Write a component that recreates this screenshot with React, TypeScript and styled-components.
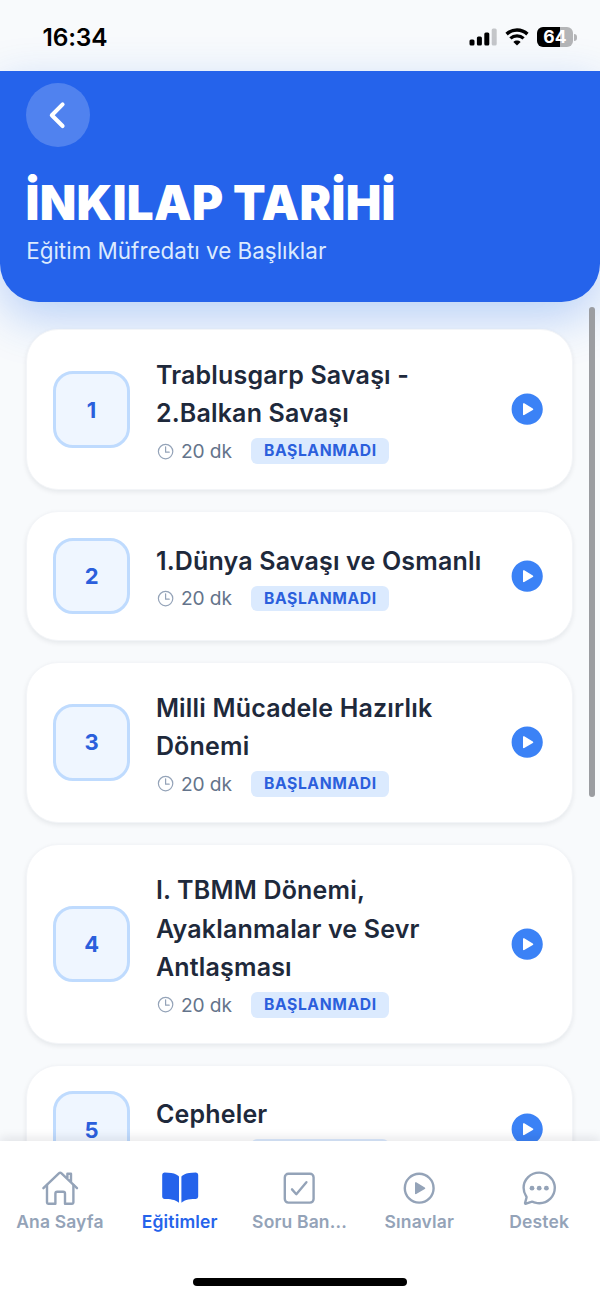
import React from "react";
import styled, { createGlobalStyle } from "styled-components";
import {
  IoBook,
  IoChatbubbleEllipsesOutline,
  IoCheckboxOutline,
  IoChevronBack,
  IoHomeOutline,
  IoPlayCircle,
  IoPlayCircleOutline,
  IoTimeOutline,
} from "react-icons/io5";

const GlobalStyle = createGlobalStyle`
  * { box-sizing: border-box; }
  body {
    margin: 0;
    background: #f8fafc;
    font-family: Inter, "Liberation Sans", sans-serif;
    overflow: hidden;
  }
  h1, h2, p { margin: 0; }
  svg { display: block; flex: none; }
`;

const Screen = styled.div`
  position: relative;
  width: 600px;
  height: 1299px;
  display: flex;
  flex-direction: column;
  overflow: hidden;
  background: #f8fafc;
`;

const StatusBar = styled.div`
  height: 70.5px;
  flex: none;
  display: flex;
  justify-content: space-between;
  padding: 0 23.5px 0 42.5px;
`;

const Clock = styled.span`
  font-size: 24.5px;
  line-height: 30px;
  font-weight: 600;
  letter-spacing: -0.2px;
  margin-top: 22px;
  color: #000;
`;

const StatusIcons = styled.div`
  display: flex;
  gap: 8px;
  height: 20px;
  align-items: center;
  margin-top: 27px;
`;

const Battery = styled.div`
  display: flex;
  align-items: center;
  gap: 1px;
`;

const BatteryBody = styled.div`
  width: 36px;
  height: 20px;
  border-radius: 6px;
  background: linear-gradient(90deg, #000 64%, #b4b5b7 64%);
  color: #fff;
  font-size: 17.5px;
  line-height: 20.5px;
  font-weight: 700;
  text-align: center;
  letter-spacing: 0.2px;
`;

const BatteryTip = styled.div`
  width: 2.5px;
  height: 7px;
  border-radius: 0 3px 3px 0;
  background: #b4b5b7;
`;

const Header = styled.header`
  height: 231.8px;
  flex: none;
  padding: 12.8px 25.6px 0;
  background: #2563eb;
  border-radius: 0 0 38.4px 38.4px;
  box-shadow: 0 16px 48px rgba(37, 112, 240, 0.3);
`;

const BackButton = styled.button`
  width: 64px;
  height: 64px;
  padding: 0;
  border: 0;
  border-radius: 50%;
  background: rgba(255, 255, 255, 0.2);
  color: #fff;
  display: flex;
  align-items: center;
  justify-content: center;
`;

const Title = styled.h1`
  margin-top: 26.5px;
  font-size: 47.5px;
  line-height: 58px;
  font-weight: 900;
  letter-spacing: 0.25px;
  color: #fff;
  white-space: nowrap;
`;

const Subtitle = styled.p`
  margin-top: 5px;
  padding-left: 0.6px;
  font-size: 22.4px;
  line-height: 28px;
  letter-spacing: 0.02px;
  color: #dbeafe;
`;

const List = styled.main`
  flex: 1;
  min-height: 0;
  overflow: hidden;
  display: flex;
  flex-direction: column;
  gap: 20.8px;
  padding: 26.4px 26.8px 0 26px;
`;

const Card = styled.article`
  flex: none;
  display: flex;
  align-items: center;
  gap: 25.9px;
  padding: 25.4px 25.4px 25.4px 26.2px;
  border: 1px solid #f3f5f8;
  border-radius: 32px;
  background: #fff;
  box-shadow: 0 2px 5px rgba(15, 23, 42, 0.08);
`;

const NumberBox = styled.div`
  width: 76.8px;
  height: 76.8px;
  flex: none;
  display: flex;
  align-items: center;
  justify-content: center;
  border: 3px solid #bfdbfe;
  border-radius: 20px;
  background: #eff6ff;
  color: #2b5fdc;
  font-size: 22px;
  font-weight: 700;
`;

const CardBody = styled.div`
  flex: 1;
  min-width: 0;
`;

const CardTitle = styled.h2`
  padding-top: 0.9px;
  font-size: 25px;
  line-height: 38.4px;
  font-weight: 600;
  letter-spacing: 0.18px;
  color: #1e293b;
  white-space: pre-line;
`;

const Meta = styled.div`
  display: flex;
  align-items: center;
  height: 25.6px;
  margin-top: 5.6px;
  color: #94a3b8;
`;

const Duration = styled.span`
  width: 70.4px;
  margin-left: 5.9px;
  font-size: 19.2px;
  letter-spacing: -0.1px;
  color: #64748b;
`;

const StatusPill = styled.span`
  width: 138px;
  height: 25.6px;
  border-radius: 6.4px;
  background: #dbeafe;
  color: #2b5fdc;
  font-size: 15.7px;
  line-height: 26.4px;
  font-weight: 700;
  letter-spacing: 0.6px;
  text-align: center;
`;

const PlayIcon = styled(IoPlayCircle)`
  color: #3b82f6;
`;

const ScrollThumb = styled.div`
  position: absolute;
  top: 307px;
  left: 589px;
  width: 5.5px;
  height: 490px;
  border-radius: 3px;
  background: #9b9da1;
`;

const TabBar = styled.nav`
  position: relative;
  height: 158.5px;
  flex: none;
  display: grid;
  grid-template-columns: repeat(5, 119.8px);
  align-items: start;
  padding-top: 28px;
  background: #fff;
  box-shadow: 0 -3px 10px rgba(15, 23, 42, 0.1);
`;

const Tab = styled.div<{ $active?: boolean }>`
  display: flex;
  flex-direction: column;
  align-items: center;
  color: ${(p) => (p.$active ? "#2563eb" : "#94a3b8")};
`;

const TabLabel = styled.span`
  margin-top: 3px;
  font-size: 17.5px;
  line-height: 24px;
  font-weight: 600;
  letter-spacing: 0.15px;
  white-space: nowrap;
`;

const HomeIndicator = styled.div`
  position: absolute;
  left: 193px;
  bottom: 13px;
  width: 214px;
  height: 8px;
  border-radius: 4px;
  background: #000;
`;

const lessons = [
  "Trablusgarp Savaşı -\n2.Balkan Savaşı",
  "1.Dünya Savaşı ve Osmanlı",
  "Milli Mücadele Hazırlık\nDönemi",
  "I. TBMM Dönemi,\nAyaklanmalar ve Sevr\nAntlaşması",
  "Cepheler",
];

const tabs = [
  { label: "Ana Sayfa", Icon: IoHomeOutline },
  { label: "Eğitimler", Icon: IoBook, active: true },
  { label: "Soru Ban...", Icon: IoCheckboxOutline },
  { label: "Sınavlar", Icon: IoPlayCircleOutline },
  { label: "Destek", Icon: IoChatbubbleEllipsesOutline },
];

function SignalIcon() {
  return (
    <svg width="28" height="18" viewBox="0 0 28 18">
      <rect x="0.5" y="11.5" width="5" height="6" rx="1.5" />
      <rect x="7.9" y="8.5" width="5" height="9" rx="1.5" />
      <rect x="15.3" y="4.5" width="5" height="13" rx="1.5" />
      <rect x="22.7" y="0.5" width="5" height="17" rx="1.5" fill="#c4c6c9" />
    </svg>
  );
}

function WifiIcon() {
  return (
    <svg width="24" height="18" viewBox="0 0 24 18">
      <path d="M1.6 6.1C7.4.7 16.6.7 22.4 6.1" fill="none" stroke="#000" strokeWidth="3.5" />
      <path d="M5.4 10.4c3.7-3.4 9.5-3.4 13.2 0" fill="none" stroke="#000" strokeWidth="3.3" />
      <path d="M12 17.6l-3.6-3.7c2-1.8 5.2-1.8 7.2 0z" />
    </svg>
  );
}

// The back chevron is drawn a little heavier than the stock Ionicons stroke.
const BackIcon = styled(IoChevronBack)`
  path {
    stroke-width: 54px;
  }
`;

export default function App() {
  return (
    <Screen>
      <GlobalStyle />
      <StatusBar>
        <Clock>16:34</Clock>
        <StatusIcons>
          <SignalIcon />
          <WifiIcon />
          <Battery>
            <BatteryBody>64</BatteryBody>
            <BatteryTip />
          </Battery>
        </StatusIcons>
      </StatusBar>
      <Header>
        <BackButton aria-label="Geri">
          <BackIcon size={38.4} />
        </BackButton>
        <Title>İNKILAP TARİHİ</Title>
        <Subtitle>Eğitim Müfredatı ve Başlıklar</Subtitle>
      </Header>
      <List>
        {lessons.map((title, index) => (
          <Card key={title}>
            <NumberBox>{index + 1}</NumberBox>
            <CardBody>
              <CardTitle>{title}</CardTitle>
              <Meta>
                <IoTimeOutline size={19.2} />
                <Duration>20 dk</Duration>
                <StatusPill>BAŞLANMADI</StatusPill>
              </Meta>
            </CardBody>
            <PlayIcon size={38.4} />
          </Card>
        ))}
      </List>
      <TabBar>
        {tabs.map(({ label, Icon, active }) => (
          <Tab key={label} $active={active}>
            <Icon size={38.4} />
            <TabLabel>{label}</TabLabel>
          </Tab>
        ))}
        <HomeIndicator />
      </TabBar>
      <ScrollThumb />
    </Screen>
  );
}
